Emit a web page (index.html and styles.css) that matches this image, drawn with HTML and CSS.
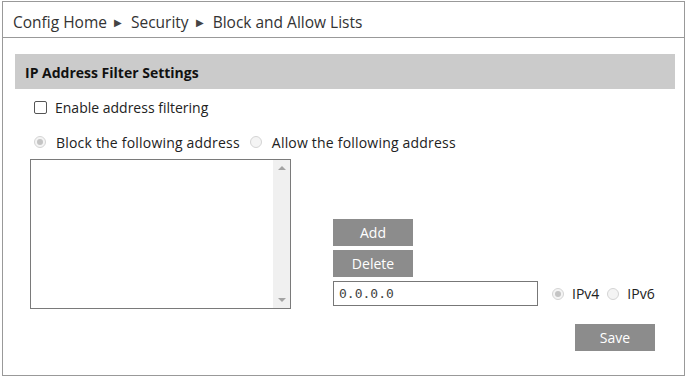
FILE: index.html
```html
<!DOCTYPE html>
<html lang="en">

<head>
    <meta charset="UTF-8">
    <meta name="viewport" content="width=device-width, initial-scale=1.0">
    <title>Block and Allow Lists</title>
    <link rel="stylesheet" href="styles.css">
</head>

<body>
    <div class="frame">
        <div class="crumbs">
            <span>Config Home</span>
            <span class="sep">&#9654;</span>
            <span>Security</span>
            <span class="sep">&#9654;</span>
            <span>Block and Allow Lists</span>
        </div>

        <section class="panel">
            <div class="panel-title">IP Address Filter Settings</div>

            <label class="check-row">
                <span class="checkbox"></span>
                Enable address filtering
            </label>

            <div class="radio-row">
                <label class="radio-item">
                    <span class="radio checked"></span>
                    Block the following address
                </label>
                <label class="radio-item">
                    <span class="radio"></span>
                    Allow the following address
                </label>
            </div>

            <div class="filter-body">
                <div class="listbox">
                    <div class="list-area"></div>
                    <div class="scrollbar">
                        <span class="arrow up"></span>
                        <span class="arrow down"></span>
                    </div>
                </div>

                <div class="controls">
                    <button class="btn">Add</button>
                    <button class="btn">Delete</button>
                    <div class="ip-row">
                        <input type="text" class="ip-input" value="0.0.0.0">
                        <label class="radio-item">
                            <span class="radio checked"></span>
                            IPv4
                        </label>
                        <label class="radio-item">
                            <span class="radio"></span>
                            IPv6
                        </label>
                    </div>
                </div>
            </div>

            <div class="save-row">
                <button class="btn">Save</button>
            </div>
        </section>
    </div>
</body>

</html>
```

FILE: styles.css
```css
* {
    box-sizing: border-box;
    margin: 0;
    padding: 0;
}

body {
    font-family: 'Open Sans', 'Noto Sans', sans-serif;
    font-size: 14px;
    color: #222;
    background-color: white;
}

.frame {
    margin: 1px 0 0 2px;
    width: 683px;
    height: 375px;
    border: 1px solid #999;
}

/* fil d'Ariane */
.crumbs {
    height: 36px;
    border-bottom: 1px solid #999;
    padding: 4px 0 0 10px;
    display: flex;
    align-items: center;
    font-size: 15.5px;
    color: #333;
}

.crumbs .sep {
    font-size: 10px;
    color: #444;
    margin: 0 9px 0 7px;
}

.panel {
    padding: 16px 9px 0 12px;
}

.panel-title {
    height: 35px;
    background-color: #cbcbcb;
    padding: 1px 0 0 10px;
    display: flex;
    align-items: center;
    font-weight: bold;
    color: #111;
}

.check-row {
    margin: 8px 0 0 19px;
    height: 20px;
    display: flex;
    align-items: center;
    gap: 8px;
}

.checkbox {
    width: 13px;
    height: 13px;
    border: 1px solid #555;
    border-radius: 2px;
    background-color: white;
}

.radio-row {
    margin: 15px 0 0 19px;
    height: 20px;
    display: flex;
    align-items: center;
    gap: 10px;
    letter-spacing: 0.2px;
}

.radio-item {
    display: flex;
    align-items: center;
    gap: 10px;
}

.radio {
    width: 12px;
    height: 12px;
    border: 1px solid #d4d4d4;
    border-radius: 50%;
    background-color: #f4f4f4;
    display: flex;
    align-items: center;
    justify-content: center;
}

.radio.checked::after {
    content: '';
    width: 6px;
    height: 6px;
    border-radius: 50%;
    background-color: #c4c4c4;
}

.filter-body {
    margin: 7px 0 0 15px;
    display: flex;
    align-items: flex-start;
    gap: 42px;
}

.listbox {
    width: 261px;
    height: 150px;
    border: 1px solid #7a7a7a;
    display: flex;
}

.list-area {
    flex: 1;
}

.scrollbar {
    width: 17px;
    background-color: #f0f0f0;
    display: flex;
    flex-direction: column;
    justify-content: space-between;
    align-items: center;
    padding: 6px 0;
}

.arrow {
    width: 0;
    height: 0;
    border-left: 4px solid transparent;
    border-right: 4px solid transparent;
}

.arrow.up {
    border-bottom: 4px solid #a3a3a3;
}

.arrow.down {
    border-top: 4px solid #a3a3a3;
}

.controls {
    margin-top: 60px;
    display: flex;
    flex-direction: column;
    align-items: flex-start;
    gap: 4px;
}

.btn {
    width: 80px;
    height: 27px;
    border: none;
    background-color: #8c8c8c;
    color: white;
    font-family: 'Open Sans', 'Noto Sans', sans-serif;
    font-size: 14px;
}

.ip-row {
    display: flex;
    align-items: center;
    gap: 8px;
}

.ip-input {
    width: 205px;
    height: 25px;
    border: 1px solid #777;
    padding-left: 5px;
    margin-right: 6px;
    font-family: 'DejaVu Sans Mono', monospace;
    font-size: 13px;
    color: #444;
}

.ip-row .radio-item {
    gap: 8px;
}

.save-row {
    margin-top: 15px;
    padding-right: 20px;
    display: flex;
    justify-content: flex-end;
}
```
